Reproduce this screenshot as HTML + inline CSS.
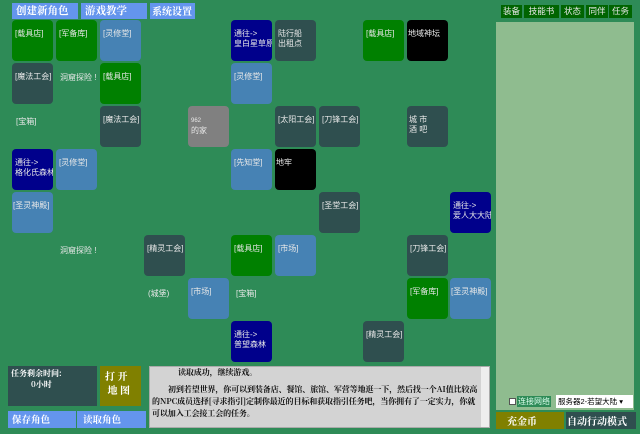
<!DOCTYPE html>
<html><head><meta charset="utf-8"><style>
*{margin:0;padding:0;box-sizing:border-box}
body{width:640px;height:434px;background:#2e8b57;position:relative;overflow:hidden;font-family:"Liberation Sans","Noto Sans CJK SC",sans-serif}
.t{position:absolute;width:41px;height:41px;border-radius:4px;color:#e8e8e8;font-size:8px;line-height:10px;padding:9px 0 0 3px;white-space:nowrap;overflow:hidden}
.g{background:#008000}.s{background:#4682b4}.d{background:#2f4f4f}.n{background:#00008b}.k{background:#000}.y{background:#808080}
.l{position:absolute;color:#e8e8e8;font-size:8px;white-space:nowrap}
.b{position:absolute;font-family:"Noto Serif CJK SC",serif;font-weight:bold;color:#fff;white-space:nowrap;overflow:hidden}
.tab{position:absolute;top:5px;height:13px;background:#006400;color:#e8e8e8;font-size:8.5px;line-height:13px;text-align:center;white-space:nowrap}
</style></head><body>
<div class="b" style="left:12px;top:3px;width:66px;height:16px;background:#6495ed;font-size:10.5px;line-height:16px;padding-left:4px">创建新角色</div>
<div class="b" style="left:81px;top:3px;width:66px;height:16px;background:#6495ed;font-size:10.5px;line-height:16px;padding-left:4px">游戏教学</div>
<div class="b" style="left:150px;top:3px;width:45px;height:16px;background:#6495ed;font-size:10px;line-height:16px;padding-left:2px">系统设置</div>

<div class="t g" style="left:12px;top:20px">[载具店]</div>
<div class="t g" style="left:56px;top:20px">[军备库]</div>
<div class="t s" style="left:100px;top:20px">[灵修堂]</div>
<div class="t n" style="left:231px;top:20px">通往-><br>皇白星草原</div>
<div class="t d" style="left:275px;top:20px">陆行船<br>出租点</div>
<div class="t g" style="left:363px;top:20px">[载具店]</div>
<div class="t k" style="left:407px;top:20px;padding-left:1px">地域神坛</div>

<div class="t d" style="left:12px;top:63px">[魔法工会]</div>
<div class="l" style="left:60px;top:72px">洞窟探险 !</div>
<div class="t g" style="left:100px;top:63px">[载具店]</div>
<div class="t s" style="left:231px;top:63px">[灵修堂]</div>

<div class="l" style="left:16px;top:116px">[宝箱]</div>
<div class="t d" style="left:100px;top:106px">[魔法工会]</div>
<div class="t y" style="left:188px;top:106px;font-size:6px;line-height:10px;padding-top:10px">962<br><span style="font-size:8px">的家</span></div>
<div class="t d" style="left:275px;top:106px">[太阳工会]</div>
<div class="t d" style="left:319px;top:106px">[刀锋工会]</div>
<div class="t d" style="left:407px;top:106px;padding-left:2px">城 市<br>酒 吧</div>

<div class="t n" style="left:12px;top:149px">通往-><br>格化氏森林</div>
<div class="t s" style="left:56px;top:149px">[灵修堂]</div>
<div class="t s" style="left:231px;top:149px">[先知堂]</div>
<div class="t k" style="left:275px;top:149px;padding-left:1px">地牢</div>

<div class="t s" style="left:12px;top:192px;padding-left:1px">[圣灵神殿]</div>
<div class="t d" style="left:319px;top:192px">[圣堂工会]</div>
<div class="t n" style="left:450px;top:192px">通往-><br>爱人大大陆</div>

<div class="l" style="left:60px;top:245px">洞窟探险 !</div>
<div class="t d" style="left:144px;top:235px">[精灵工会]</div>
<div class="t g" style="left:231px;top:235px">[载具店]</div>
<div class="t s" style="left:275px;top:235px">[市场]</div>
<div class="t d" style="left:407px;top:235px">[刀锋工会]</div>

<div class="l" style="left:148px;top:288px">(城堡)</div>
<div class="t s" style="left:188px;top:278px">[市场]</div>
<div class="l" style="left:236px;top:288px">[宝箱]</div>
<div class="t g" style="left:407px;top:278px">[军备库]</div>
<div class="t s" style="left:450px;top:278px;padding-left:1px">[圣灵神殿]</div>

<div class="t n" style="left:231px;top:321px">通往-><br>普望森林</div>
<div class="t d" style="left:363px;top:321px">[精灵工会]</div>

<!-- right -->
<div class="tab" style="left:501px;width:21px">装备</div>
<div class="tab" style="left:524px;width:35px">技能书</div>
<div class="tab" style="left:561px;width:23px">状态</div>
<div class="tab" style="left:586px;width:22px">同伴</div>
<div class="tab" style="left:609px;width:23px">任务</div>
<div style="position:absolute;left:496px;top:22px;width:138px;height:388px;background:#8fbc8f"></div>
<div style="position:absolute;left:509px;top:398px;width:7px;height:7px;background:#fff;border:1px solid #555"></div>
<div class="l" style="left:517px;top:396px;font-size:8px;background:#2e8b57;padding:0 1px;color:#dfe">连接网络</div>
<div style="position:absolute;left:556px;top:395px;width:77px;height:13px;background:#fff;font-size:7.5px;line-height:13px;padding-left:2px;color:#000;white-space:nowrap;overflow:hidden">服务器2-若望大陆 ▾</div>
<div class="b" style="left:496px;top:412px;width:68px;height:17px;background:#808000;font-size:10px;padding-left:11px;line-height:17px">充金币</div>
<div class="b" style="left:566px;top:412px;width:70px;height:17px;background:#2f4f4f;font-size:10px;padding-left:1px;line-height:17px">自动行动模式</div>

<!-- bottom left -->
<div class="b" style="left:8px;top:366px;width:89px;height:40px;background:#2f4f4f;font-size:8px;line-height:11px;padding:2px 0 0 3px">任务剩余时间:<br>&nbsp;&nbsp;&nbsp;&nbsp;&nbsp;&nbsp;&nbsp;&nbsp;&nbsp;&nbsp;0小时</div>
<div class="b" style="left:100px;top:366px;width:41px;height:40px;background:#808000;font-size:10px;line-height:14px;padding:3px 0 0 5px">打 开<br>&nbsp;地 图</div>
<div class="b" style="left:8px;top:411px;width:68px;height:17px;background:#6495ed;font-size:9.5px;line-height:17px;padding-left:4px">保存角色</div>
<div class="b" style="left:77px;top:411px;width:69px;height:17px;background:#6495ed;font-size:9.5px;line-height:17px;padding-left:6px">读取角色</div>

<div style="position:absolute;left:149px;top:366px;width:341px;height:62px;background:#d3d3d3;border:1px solid #aaa;font-family:'Noto Serif CJK SC',serif;font-weight:bold;font-size:8px;line-height:12px;color:#111;padding:0 8px 0 2px;letter-spacing:-0.1px;overflow:hidden">
<div style="padding-left:26px">读取成功，继续游戏。</div>
<div style="height:5px"></div>
<div style="text-indent:16px">初到若望世界，你可以到装备店、餐馆、旅馆、军营等地逛一下，然后找一个AI值比较高的NPC成员选择[寻求指引]定制你最近的目标和获取指引任务吧，当你拥有了一定实力，你就可以加入工会接工会的任务。</div>
<div style="position:absolute;right:0;top:0;width:8px;height:60px;background:#eee"></div>
</div>
</body></html>
